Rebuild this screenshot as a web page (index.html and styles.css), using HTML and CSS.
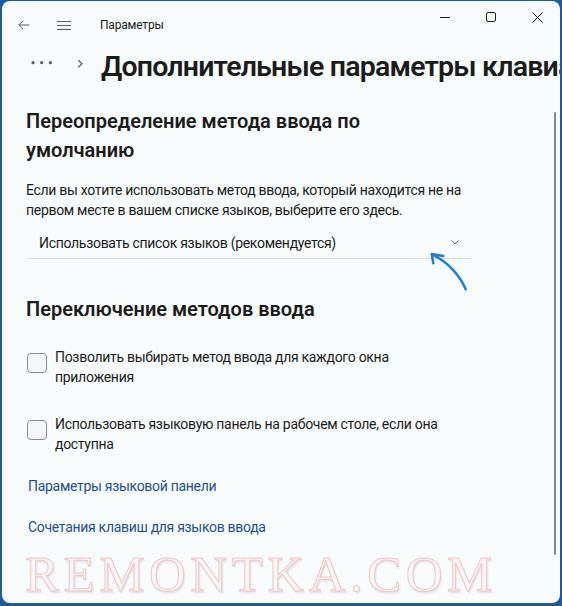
FILE: index.html
```html
<!DOCTYPE html>
<html lang="ru">
<head>
  <meta charset="UTF-8" />
  <title>Параметры</title>
  <link rel="stylesheet" href="styles.css">
</head>
<body>

<div class="window">
  <div class="titlebar">
    <span class="tb-btn">
      <svg width="12" height="10" viewBox="0 0 12 10"><path d="M11.5 5H0.8M5 0.8L0.8 5L5 9.2" /></svg>
    </span>
    <span class="tb-btn">
      <svg width="14" height="9" viewBox="0 0 14 9"><path d="M0 0.5H14M0 4.5H14M0 8.5H14" /></svg>
    </span>
    <span class="app-title">Параметры</span>
    <div class="caption">
      <span class="cap-btn"><svg width="10" height="10" viewBox="0 0 10 10"><path d="M0 5.5H10" /></svg></span>
      <span class="cap-btn"><svg width="10" height="10" viewBox="0 0 10 10"><rect x="0.5" y="0.5" width="9" height="9" rx="1.5" /></svg></span>
      <span class="cap-btn"><svg width="11" height="11" viewBox="0 0 11 11"><path d="M0.5 0.5L10.5 10.5M10.5 0.5L0.5 10.5" /></svg></span>
    </div>
  </div>

  <div class="crumbs">
    <svg class="more" width="22" height="36" viewBox="0 0 22 36">
      <circle cx="2" cy="13.7" r="1.6" />
      <circle cx="10.7" cy="13.7" r="1.6" />
      <circle cx="19.4" cy="13.7" r="1.6" />
    </svg>
    <svg class="chev" width="8" height="36" viewBox="0 0 8 36"><path d="M2.3 11.3L6 14.8L2.3 18.3" /></svg>
    <h1>Дополнительные параметры клавиатуры</h1>
  </div>

  <div class="body">
    <main class="content">
      <h2 class="first">Переопределение метода ввода по<br>умолчанию</h2>
      <p>Если вы хотите использовать метод ввода, который находится не на<br>первом месте в вашем списке языков, выберите его здесь.</p>

      <div class="select">
        <span>Использовать список языков (рекомендуется)</span>
        <svg width="8" height="5" viewBox="0 0 8 5"><path d="M0.5 0.5L4 4L7.5 0.5" /></svg>
        <svg class="pointer" width="50" height="50" viewBox="0 0 50 50">
          <path d="M42.7 42.3C38 31 27 16 9.5 7.7" />
          <path d="M20.3 9L8.7 7L10.3 16.3" />
        </svg>
      </div>

      <h2 class="second">Переключение методов ввода</h2>

      <label class="check">
        <span class="box"></span>
        <span>Позволить выбирать метод ввода для каждого окна<br>приложения</span>
      </label>
      <label class="check second-check">
        <span class="box"></span>
        <span>Использовать языковую панель на рабочем столе, если она<br>доступна</span>
      </label>

      <a class="link" href="#">Параметры языковой панели</a>
      <a class="link link-last" href="#">Сочетания клавиш для языков ввода</a>

      <div class="watermark">REMONTKA.COM</div>
    </main>
    <div class="scrollbar"><div class="thumb"></div></div>
  </div>
</div>

</body>
</html>
```

FILE: styles.css
```css
body {
  margin: 0;
  background: #1d5b99;
  font-family: Roboto, 'Noto Sans', sans-serif;
  color: #1b1b1b;
  overflow: hidden;
}

.window {
  margin: 1px 2px 3px 2px;
  height: 602px;
  background: #f8fbfc;
  border-radius: 8px;
  overflow: hidden;
  display: flex;
  flex-direction: column;
}

/* title bar */

.titlebar {
  height: 48px;
  display: flex;
  align-items: center;
  padding-left: 2px;
  flex-shrink: 0;
}

.tb-btn {
  width: 40px;
  height: 48px;
  display: flex;
  align-items: center;
  justify-content: center;
}

.tb-btn svg,
.cap-btn svg {
  fill: none;
  stroke: #5c5c5c;
  stroke-width: 1;
}

.cap-btn svg {
  stroke: #1b1b1b;
}

.app-title {
  margin-left: 16px;
  font-size: 12px;
  letter-spacing: -0.2px;
}

.caption {
  margin-left: auto;
  align-self: flex-start;
  display: flex;
}

.cap-btn {
  width: 46px;
  height: 32px;
  display: flex;
  align-items: center;
  justify-content: center;
}

/* breadcrumb */

.crumbs {
  height: 36px;
  display: flex;
  align-items: center;
  padding-left: 29px;
  flex-shrink: 0;
  min-width: 0;
}

.crumbs .more {
  fill: #5e5e5e;
  flex-shrink: 0;
}

.crumbs .chev {
  margin-left: 23px;
  fill: none;
  stroke: #5e5e5e;
  stroke-width: 1.3;
  flex-shrink: 0;
}

.crumbs h1 {
  margin: 0 0 0 17px;
  font-size: 28.5px;
  font-weight: 600;
  line-height: 36px;
  letter-spacing: -0.8px;
  white-space: nowrap;
}

/* page body */

.body {
  flex: 1;
  display: flex;
  min-height: 0;
}

.content {
  flex: 1;
  padding-left: 24px;
  display: flex;
  flex-direction: column;
  align-items: flex-start;
  font-size: 14px;
  line-height: 20px;
  letter-spacing: -0.3px;
}

h2 {
  margin: 0;
  font-size: 20px;
  font-weight: 600;
  line-height: 29px;
  letter-spacing: 0;
}

h2.first {
  margin-top: 22px;
}

h2.second {
  margin-top: 36px;
}

p {
  margin: 15px 0 0;
}

.select {
  position: relative;
  margin: 7px 0 0 2px;
  width: 443px;
  height: 32px;
  box-sizing: border-box;
  padding: 0 12px 0 11px;
  display: flex;
  align-items: center;
  justify-content: space-between;
  border-bottom: 1px solid #dedede;
}

.select svg {
  fill: none;
  stroke: #6a6a6a;
  stroke-width: 1;
}

.select .pointer {
  position: absolute;
  left: 395px;
  top: 20px;
  stroke: #1f7dd6;
  stroke-width: 2.5;
  stroke-linecap: round;
  stroke-linejoin: round;
}

.check {
  margin: 23px 0 0 1px;
  display: flex;
  align-items: flex-start;
  gap: 8px;
}

.check.second-check {
  margin-top: 27px;
}

.box {
  width: 20px;
  height: 20px;
  box-sizing: border-box;
  margin-top: 6px;
  border: 1px solid #8b8b8b;
  border-radius: 4px;
  background: #f4f6f7;
  flex-shrink: 0;
}

.link {
  margin: 22px 0 0 2px;
  color: #1d4f96;
  text-decoration: none;
}

.link.link-last {
  margin-top: 21px;
}

.watermark {
  margin: 12px 0 0 -1px;
  font-family: 'Liberation Serif', serif;
  font-size: 51px;
  line-height: 51px;
  letter-spacing: 4.5px;
  color: #fdf6f6;
  -webkit-text-stroke: 1px #efc6c6;
  text-shadow: 1px 2px 2px rgba(110, 110, 110, 0.2);
}

.scrollbar {
  width: 8px;
  flex-shrink: 0;
}

.thumb {
  margin: 27px 0 0 2px;
  width: 2px;
  height: 443px;
  border-radius: 1px;
  background: #8a8a8a;
}
```
